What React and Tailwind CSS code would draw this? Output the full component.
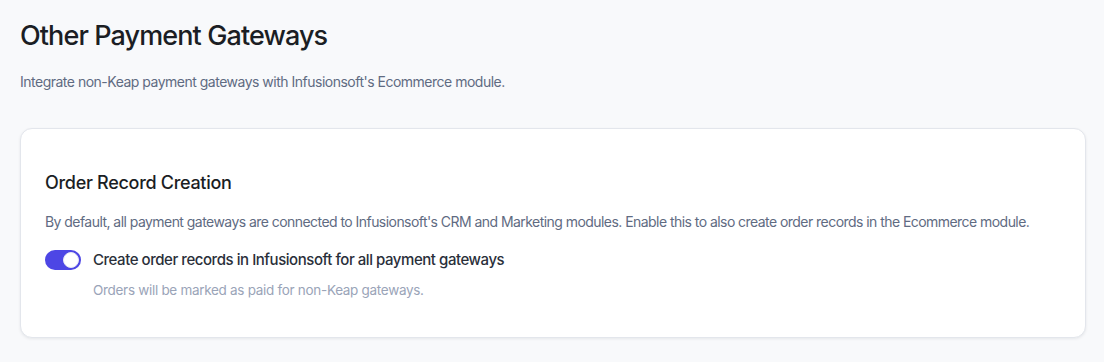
export default function App() {
  return (
    <div
      className="min-h-[362px] w-full bg-[#f8f9fb] px-5 pt-[18px]"
      style={{ fontFamily: "Inter, 'Noto Sans', sans-serif" }}
    >
      <h1 className="text-[27px] font-medium leading-[36px] tracking-[-0.9px] text-[#1b1e24]">
        Other Payment Gateways
      </h1>
      <p className="mt-[18px] text-[14px] leading-[20px] tracking-[-0.5px] text-[#5f6b82]">
        Integrate non-Keap payment gateways with Infusionsoft's Ecommerce module.
      </p>

      <div className="mt-[36px] w-[1066px] rounded-xl border border-[#e3e6ec] bg-white px-6 pb-[37px] pt-[42px] shadow-[0_1px_3px_rgba(16,24,40,0.08)]">
        <h2 className="text-[18px] font-medium leading-[24px] tracking-[-0.3px] text-[#1b1e24]">
          Order Record Creation
        </h2>
        <p className="mt-[17px] whitespace-nowrap text-[14px] leading-[20px] tracking-[-0.55px] text-[#5f6b82]">
          By default, all payment gateways are connected to Infusionsoft's CRM and Marketing modules. Enable this to also create order records in the Ecommerce module.
        </p>
        <div className="mt-[18px] flex items-center gap-3">
          <button className="flex h-5 w-9 items-center justify-end rounded-full bg-[#4d46e5] px-[2px]">
            <span className="block h-4 w-4 rounded-full border border-[#e8e8f5] bg-white" />
          </button>
          <span className="text-[15px] font-medium leading-[20px] tracking-[-0.45px] text-[#2a2f3a]">
            Create order records in Infusionsoft for all payment gateways
          </span>
        </div>
        <p className="ml-12 mt-[10px] text-[13.5px] leading-[20px] tracking-[-0.3px] text-[#9aa4b8]">
          Orders will be marked as paid for non-Keap gateways.
        </p>
      </div>
    </div>
  );
}
